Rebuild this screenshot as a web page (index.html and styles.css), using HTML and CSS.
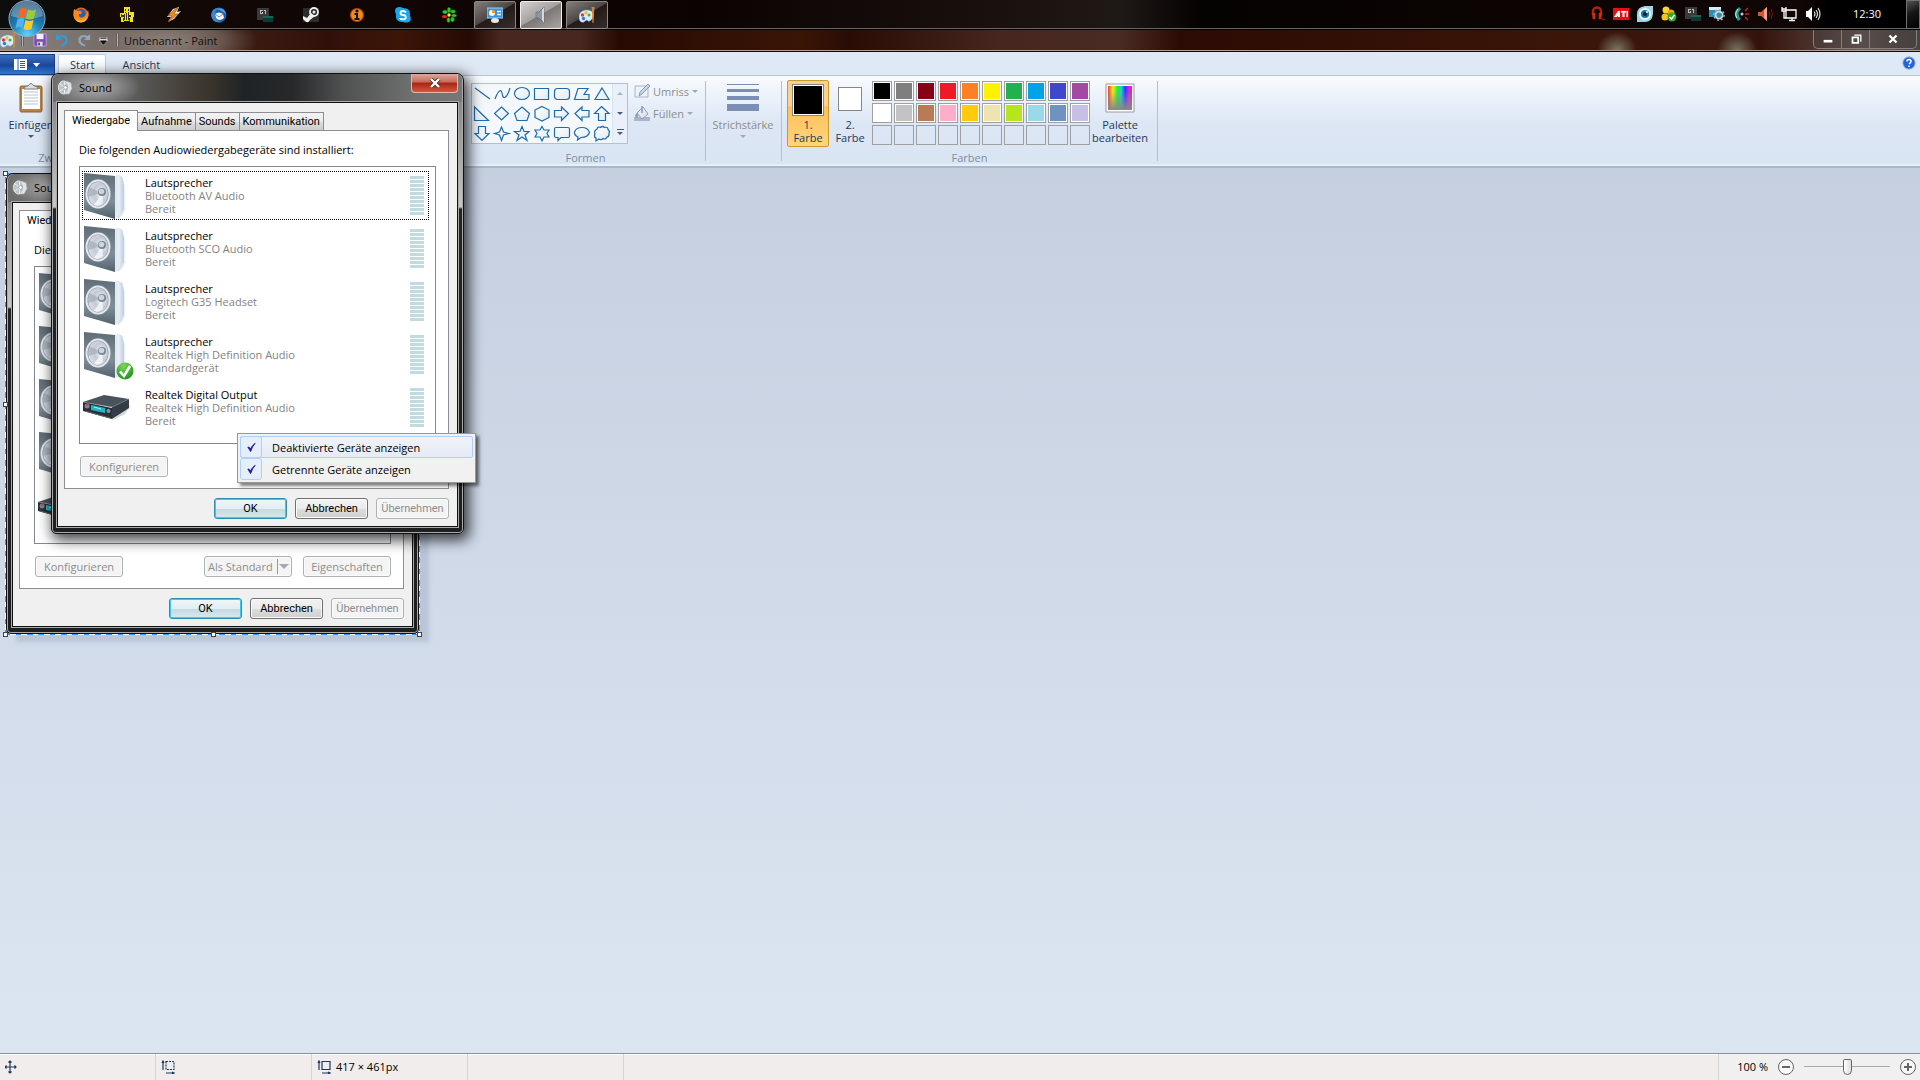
FILE: index.html
```html
<!DOCTYPE html>
<html lang="de">
<head>
<meta charset="utf-8">
<meta name="viewport" content="width=device-width, initial-scale=1.0">
<title>Unbenannt - Paint</title>
<link rel="stylesheet" href="styles.css">
</head>
<body>
<!-- Symbole -->
<svg class="defs" width="0" height="0" aria-hidden="true">
<defs>
<linearGradient id="g-side" x1="0" x2="0" y1="0" y2="1"><stop offset="0" stop-color="#5f6d77"/><stop offset=".6" stop-color="#7f8f9a"/><stop offset="1" stop-color="#52616b"/></linearGradient>
<linearGradient id="g-glass" x1="0" x2="1"><stop offset="0" stop-color="#f8fbfe"/><stop offset="1" stop-color="#b9cbe0"/></linearGradient>
<radialGradient id="g-cone" cx=".65" cy=".45" r=".7"><stop offset="0" stop-color="#f4f6f8"/><stop offset=".5" stop-color="#c3cad3"/><stop offset="1" stop-color="#dde2e7"/></radialGradient>
<radialGradient id="g-ok" cx=".4" cy=".2" r=".9"><stop offset="0" stop-color="#7fd65c"/><stop offset="1" stop-color="#128a12"/></radialGradient>
<radialGradient id="g-orb" cx=".5" cy=".95" r=".95"><stop offset="0" stop-color="#5ed6fb"/><stop offset=".45" stop-color="#1f7fb5"/><stop offset="1" stop-color="#1d4468"/></radialGradient>
<linearGradient id="g-shape" x1="0" x2="1" y1="0" y2="1"><stop offset="0" stop-color="#fff"/><stop offset="1" stop-color="#dcebf5"/></linearGradient>
<linearGradient id="g-rainbow"><stop offset="0" stop-color="#f33"/><stop offset=".2" stop-color="#ee2"/><stop offset=".4" stop-color="#2e3"/><stop offset=".55" stop-color="#2cd"/><stop offset=".72" stop-color="#33f"/><stop offset=".88" stop-color="#d2e"/><stop offset="1" stop-color="#f24"/></linearGradient>
<linearGradient id="g-fade" x1="0" x2="0" y1="0" y2="1"><stop offset=".2" stop-color="#888" stop-opacity="0"/><stop offset="1" stop-color="#888"/></linearGradient>
</defs>
<symbol id="speaker" viewBox="0 0 44 48">
<path d="M34 44L43 35 38 44 34 47z" fill="#ddd" opacity=".6"/>
<path d="M33 3L38 5 40 13v24l-6 9z" fill="url(#g-glass)" stroke="#c7d5e5" stroke-width=".6"/>
<path d="M0 1L31 4v43L0 38z" fill="url(#g-side)"/>
<path d="M31 4l3-1v42l-3 2z" fill="#e4e9ee"/>
<ellipse cx="14.500" cy="22" rx="13" ry="15" fill="#7c8993"/>
<ellipse cx="14" cy="22" rx="12.500" ry="14.500" fill="#e4e8ec"/>
<ellipse cx="14" cy="22" rx="10.500" ry="12.500" fill="#8591a0"/>
<ellipse cx="14" cy="22" rx="10" ry="12" fill="url(#g-cone)"/>
<path d="M18 21L5 15Q3 20 4 25z" fill="#9ba7b4" opacity=".6"/>
<path d="M18 21L10 33q5 2 9-2z" fill="#fff" opacity=".7"/>
<circle cx="18" cy="20" r="4" fill="#78848f"/><circle cx="17.500" cy="19.500" r="2.800" fill="#cdd4da"/>
</symbol>
<symbol id="mini-speaker" viewBox="0 0 16 16">
<path d="M9 1l5 2 1 6-3 6-4 0z" fill="#dfe3e6" stroke="#9aa0a4" stroke-width=".7"/>
<ellipse cx="6" cy="8" rx="5.500" ry="7" fill="#bcc3c7" stroke="#e9ecee"/>
<path d="M7 8L2 4M7 8l-5 4M7 8V2M7 8v6" stroke="#f4f6f7"/>
<circle cx="8" cy="8" r="2" fill="#fff" stroke="#6d767c" stroke-width=".6"/>
</symbol>
<symbol id="receiver" viewBox="0 0 50 30">
<path d="M40 18l9-6-6 9-14 7z" fill="#bbb" opacity=".6"/>
<path d="M1 9L22 2l25 4-17 8z" fill="#4a535c"/>
<path d="M1 9l29 6v11L1 18z" fill="#2a3037"/>
<path d="M30 14L47 6v9L30 26z" fill="#333c47"/>
<path d="M1 9l29 5 17-8" fill="none" stroke="#77818b" stroke-width=".6"/>
<path d="M9 12l14 3v5L9 17z" fill="#23b4c4"/><path d="M12 14l7 2" stroke="#8ff" stroke-width="1"/>
<circle cx="5" cy="13" r="2.500" fill="#7d858e"/><circle cx="5" cy="12" r="1" fill="#e33"/>
<circle cx="26.500" cy="18" r="2" fill="#8a939b"/><path d="M3 18l25 7" stroke="#59636c"/>
</symbol>
<symbol id="palette" viewBox="0 0 16 16">
<path d="M0 10C0 5 4 3 8 3c5 0 7 3 6 7-1 3-4 5-5 4-1-2-3 0-4 1-3 1-5-1-5-5z" fill="#d8edf8" stroke="#6fa6c8" stroke-width=".6"/>
<circle cx="3.500" cy="8" r="1.700" fill="#e33"/><circle cx="7" cy="5.800" r="1.600" fill="#f7b21d"/><circle cx="10" cy="8" r="1.500" fill="#39b54a"/><circle cx="4.500" cy="11.500" r="1.700" fill="#2a7fd4"/>
<path d="M13 6h2l-.5 10h-1z" fill="#f08a24"/><path d="M12.500 0h3l-.5 6h-2z" fill="#c98448"/>
</symbol>
<symbol id="g1" viewBox="0 0 16 16">
<path d="M0 1h12v12H0z" fill="#3a3a3a"/><path d="M3 3h3v1H4v2h1V5h1v2H3zM7 3h2v4H8V4H7z" fill="#bbb"/><path d="M6 9h10v6H6z" fill="#0c3a34"/><path d="M6 9h10v2H6z" fill="#1a6458"/>
</symbol>
</svg>

<div class="screen">
<header class="taskbar">
<button class="orb" aria-label="Start">
<svg viewBox="0 0 38 38"><circle cx="19" cy="18.500" r="18" fill="url(#g-orb)" stroke="#8db0c8"/><path d="M3 16a16 15 0 0 1 32 0q-16 6-32 0z" fill="#fff" opacity=".28"/>
<path d="M12 9q4-2 7 0l-2 9q-3-2-7 0z" fill="#ef6a28"/><path d="M20 9.500q4 2 8 0l-2 9q-4 2-8 0z" fill="#9bcb3c"/><path d="M9.500 19q4-2 7 0l-2 9q-3-2-7 0z" fill="#4fb4ec"/><path d="M17.500 20q4 2 8 0l-2 9q-4 2-8 0z" fill="#fdc930"/></svg>
</button>
<nav class="apps">
<button class="app" aria-label="Firefox"><svg viewBox="0 0 16 16"><circle cx="8" cy="8" r="7.500" fill="#e8650d"/><circle cx="8" cy="6.500" r="4.600" fill="#2b5fa8"/><path d="M1 2l3 2c4-1 6 1 4 3H6c-1 4 4 5 7 1l2-5c2 6-1 12-7 12S-1 10 1 2z" fill="#f58a1f"/><path d="M3 12q6 4 11-2-1 5-6 5.500-4 0-5-3.500z" fill="#fcc02e"/></svg></button>
<button class="app" aria-label="qip"><svg viewBox="0 0 16 16"><path d="M5 0h6v5h4v5h-1v5h-3v-1H5v1H2v-5H1V6h4z" fill="#f6e416"/><path d="M6 2h1v2H6zM9 2h1v2H9zM3 8h2v2H3zM7 6h1v7H7zM10 8h2v2h-2zM4 11h1v3H4zM10 11h1v3h-1zM6 5h1v1H6zM9 5h1v8H9zM2 7h1v3H2zM5 7h1v6H5z" fill="#332"/></svg></button>
<button class="app" aria-label="Winamp"><svg viewBox="0 0 16 16"><path d="M8 2L2 10h4l-3 5 6-3 7-8-4 1 2-5z" fill="#eee"/><path d="M10 2L3 9h4l-4 6 10-8H9l4-6z" fill="#ef8b1b" stroke="#a34d05" stroke-width=".6"/></svg></button>
<button class="app" aria-label="Thunderbird"><svg viewBox="0 0 16 16"><circle cx="8" cy="8" r="7.500" fill="#1f5fae"/><path d="M4 7q4-3 8 0l1 4q-5 4-8 0z" fill="#f2f4f6"/><path d="M4 7l4 3 4-3" fill="none" stroke="#889"/><path d="M0 8Q1 0 9 1 3 3 4 9t8 6Q1 17 0 8z" fill="#3989d2"/><path d="M6 2q7-2 9 5l-3-2q-2-2-6-3z" fill="#5aa0e0"/></svg></button>
<button class="app" aria-label="G1"><svg><use href="#g1"/></svg></button>
<button class="app" aria-label="Steam"><svg viewBox="0 0 16 16"><path d="M0 1h16v14H0z" fill="#2c2c2c"/><circle cx="11" cy="5" r="4" fill="#2c2c2c" stroke="#eee" stroke-width="1.800"/><path d="M0 9l4 2 4-5 4 3-5 4q-2 4-5 1l-2-2z" fill="#eee"/><circle cx="11" cy="5" r="1.500" fill="#eee"/></svg></button>
<button class="app" aria-label="Info"><svg viewBox="0 0 16 16"><circle cx="8" cy="8" r="6.500" fill="#f08b1c" stroke="#b43d0b" stroke-width="1.200"/><circle cx="8" cy="4" r="1.600" fill="#110"/><path d="M5.500 6H9v5h1.500v2h-5v-2H7V8H5.500z" fill="#110"/></svg></button>
<button class="app" aria-label="Skype"><svg viewBox="0 0 16 16"><path d="M1 1q4-2 7 0 8 0 7 8 2 4-1 6-3 1-6 0Q0 15 1 7-1 4 1 1z" fill="#18a7ec"/><path d="M11 5.500Q10 4 8 4 5.500 4 5.500 6T8 8t2.800 2.200T8 12.300 5 11" fill="none" stroke="#fff" stroke-width="1.800"/></svg></button>
<button class="app" aria-label="ICQ"><svg viewBox="0 0 16 16"><g fill="#3cc22c" stroke="#0b6410" stroke-width=".5"><ellipse cx="8" cy="3" rx="1.800" ry="2.800"/><ellipse cx="12" cy="4.500" rx="2.600" ry="1.800"/><ellipse cx="13" cy="8.500" rx="2.700" ry="1.600"/><ellipse cx="11.500" cy="12.500" rx="1.900" ry="2.400"/><ellipse cx="7.500" cy="13" rx="1.700" ry="2.600"/><ellipse cx="4" cy="5" rx="2.600" ry="1.900"/></g><ellipse cx="3.500" cy="9.500" rx="2.600" ry="1.500" fill="#e22a1c"/><circle cx="8" cy="8" r="1.700" fill="#f6ed4b"/></svg></button>
<button class="app task" aria-label="Systemsteuerung"><svg viewBox="0 0 16 16"><path d="M0 1h16v10H0z" fill="#3a93dc" stroke="#9fd4f7"/><circle cx="5" cy="6" r="3" fill="#fff"/><path d="M5 6V3a3 3 0 0 1 3 3z" fill="#f6921e"/><path d="M10 4.500h4M10 7.500h4" stroke="#fff" stroke-width="1.400"/><ellipse cx="8" cy="13.500" rx="4" ry="2.500" fill="#e8e8e8"/></svg></button>
<button class="app task current" aria-label="Sound"><svg viewBox="0 0 16 16"><path d="M3 5h3l5-5v16l-5-5H3z" fill="#8d98a0" stroke="#59646c" stroke-width=".6"/><path d="M9 3l2-3v16l-2-3z" fill="#d3dade"/></svg></button>
<button class="app task" aria-label="Paint"><svg><use href="#palette"/></svg></button>
</nav>
<div class="tray">
<svg viewBox="0 0 16 16"><path d="M4 9V5.500a4 4 0 0 1 8 0V9" fill="none" stroke="#b4240c" stroke-width="2.400"/><path d="M3 7h3v6H4zM10 7h3l-1 6h-2zM11 12l5 2z" fill="#d9300f" stroke="#b4240c" stroke-width=".6"/></svg>
<svg viewBox="0 0 16 16"><path d="M0 2h16v12H0z" fill="#e60f12"/><path d="M1 11l4-6h2v6H5V9.500L4 11zM8 5h5v1.500h-1.500V11h-2V6.500H8zM13.500 5H15v6h-1.500z" fill="#fff"/></svg>
<svg viewBox="0 0 16 16"><path d="M0 8q0-7 8-8h8v8q-1 8-8 8H0z" fill="#9fd4e2"/><circle cx="8" cy="8" r="6" fill="#eef8fb"/><circle cx="8" cy="8" r="4" fill="#15789d"/><circle cx="8" cy="8" r="2" fill="#04283a"/><circle cx="10" cy="6" r="1" fill="#fff"/></svg>
<svg viewBox="0 0 16 16"><circle cx="5" cy="4" r="3.500" fill="#fbd435"/><circle cx="10" cy="7" r="3.500" fill="#e7a911"/><circle cx="4" cy="11" r="3.500" fill="#f4c422"/><circle cx="11" cy="11" r="4.500" fill="#35a52b"/><path d="M8.500 11l2 2 3-4" fill="none" stroke="#fff" stroke-width="1.500"/></svg>
<svg><use href="#g1"/></svg>
<svg viewBox="0 0 16 16"><path d="M0 1h12v10H0z" fill="#2f8fb2"/><path d="M0 1h12v3H0z" fill="#d5eef6"/><circle cx="10" cy="9" r="3.500" fill="none" stroke="#ccd5d9" stroke-width="2"/><circle cx="10" cy="9" r="5.200" fill="none" stroke="#9db0b8" stroke-width="1.400" stroke-dasharray="2 2"/></svg>
<svg viewBox="0 0 16 16"><path d="M6 1Q-2 7 5 15L8 13Q3 8 8 3z" fill="#1d9a8c"/><path d="M5 3Q1 8 4 12" stroke="#d6f5ef" fill="none"/><circle cx="9" cy="8" r="1.500" fill="#ccc"/><path d="M12 5l3-3M12 8h4M12 11l3 3" stroke="#c22" stroke-width="1.300"/></svg>
<svg viewBox="0 0 16 16"><path d="M1 6h3l6-5v14l-6-5H1z" fill="#d0563a"/><path d="M7 4l3-3v14l-3-3z" fill="#f3a38a"/><path d="M12 5q2 3 0 6M14 3q3 5 0 10" stroke="#6b1b10" fill="none"/></svg>
<svg viewBox="0 0 16 16" fill="none" stroke="#fff" stroke-width="1.300"><path d="M5 4h10v8H5zM8 14.500h6M11 12v2M3 7v5h2M1 1v4h4V1M3 5v3M1 3h4"/></svg>
<svg viewBox="0 0 16 16"><path d="M1 5h2l4-4v14l-4-4H1z" fill="#fff"/><path d="M9 5.500q2 2.500 0 5M11 4q3 4 0 8M13 2q4 6 0 12" stroke="#ddd" stroke-width="1.200" fill="none"/></svg>
</div>
<time class="clock">12:30</time>
<button class="show-desktop" aria-label="Desktop anzeigen"></button>
</header>

<main class="paint">
<div class="titlebar">
<svg class="title-icon"><use href="#palette"/></svg>
<span class="bar-sep"></span>
<button aria-label="Speichern"><svg viewBox="0 0 16 16"><path d="M1 1h14v14H1z" fill="#7b4fb4" stroke="#b9a0dc"/><path d="M4 1h8v6H4z" fill="#f4f0fa"/><path d="M5 10h6v5H5z" fill="#ddd"/><path d="M6 11h2v3H6z" fill="#553a85"/></svg></button>
<button aria-label="Rückgängig"><svg viewBox="0 0 16 16"><path d="M1 1v7h7L5.500 5.500Q10 3 11.500 7T7 13v2.500Q15 13 14.500 7 12 0 4 3.500z" fill="#2f9be0"/></svg></button>
<button aria-label="Wiederholen"><svg viewBox="0 0 16 16"><path d="M15 1v7H8l2.500-2.500Q6 3 4.500 7T9 13v2.500Q1 13 1.500 7 4 0 12 3.500z" fill="#93a4bb"/></svg></button>
<button class="customize" aria-label="Schnellzugriff anpassen"><svg viewBox="0 0 16 16"><path d="M4 5h9v3H4zM3 8h11l-5.500 6z" fill="#ddd"/><path d="M5 6h7M5 9h7l-3.500 4z" stroke="#111" fill="#111"/></svg></button>
<span class="bar-sep"></span>
<h1>Unbenannt - Paint</h1>
<div class="win-controls">
<button aria-label="Minimieren"><svg viewBox="0 0 16 16"><path d="M3 9h10v3H3z" fill="#fff"/></svg></button>
<button aria-label="Verkleinern"><svg viewBox="0 0 16 16" fill="none" stroke="#fff"><path d="M6 3.500h7.500V11" stroke-width="1.500"/><path d="M4 6h6.500v6.500H4z" stroke-width="2"/></svg></button>
<button class="wide" aria-label="Schließen"><svg viewBox="0 0 16 16"><path d="M4 4l8 8M12 4l-8 8" stroke="#fff" stroke-width="2.600"/></svg></button>
</div>
</div>

<div class="tab-row">
<button class="file-btn" aria-label="Paint-Menü"><svg viewBox="0 0 28 14"><path d="M1 1h13v11H1z" fill="#fff"/><path d="M5 1v11" stroke="#2b5fae"/><path d="M7 3.500h5M7 5.500h5M7 7.500h5M7 9.500h5" stroke="#2b5fae"/><path d="M20 5h7l-3.500 4z" fill="#fff"/></svg></button>
<button class="rtab active">Start</button>
<button class="rtab">Ansicht</button>
<button class="help" aria-label="Hilfe"><svg viewBox="0 0 14 14"><circle cx="7" cy="7" r="6.200" fill="#2563d8" stroke="#9db9e6"/><path d="M5 5.500Q5 3.500 7 3.500t2 2Q9 6.500 7 8M7 9.500V11" fill="none" stroke="#fff" stroke-width="1.500"/></svg></button>
</div>

<div class="ribbon">
<section class="group clip-group">
<div class="group-body">
<button class="big"><svg class="clip" viewBox="0 0 24 30"><rect x="1" y="3" width="22" height="26" rx="1.500" fill="#b88440" stroke="#8e6128"/><path d="M3 6h18v20H3z" fill="#fff"/><path d="M5 9h14M5 12h14M5 15h14M5 18h14M5 21h14" stroke="#b5c4d0"/><path d="M5 6q0-3 4-3 3-5 6 0 4 0 4 3z" fill="#dde0e2" stroke="#7c7f80"/></svg>Einfügen<i class="arrow"></i></button>
</div>
<h2>Zwischenablage</h2>
</section>
<section class="group tools-group"></section>
<section class="group shape-group">
<div class="group-body">
<div class="gallery">
<div class="shapes">
<button aria-label="Linie"><svg viewBox="0 0 20 20"><path d="M3 4l15 11"/></svg></button>
<button aria-label="Kurve"><svg viewBox="0 0 20 20"><path d="M3 15C6 7 9 4 10 9c1 8 5 5 8-5" fill="none"/></svg></button>
<button aria-label="Ellipse"><svg viewBox="0 0 20 20"><ellipse cx="10" cy="9.500" rx="7.500" ry="6"/></svg></button>
<button aria-label="Rechteck"><svg viewBox="0 0 20 20"><path d="M2.500 4.500h14v11h-14z"/></svg></button>
<button aria-label="Abgerundetes Rechteck"><svg viewBox="0 0 20 20"><rect x="2.500" y="4.500" width="15" height="11" rx="3"/></svg></button>
<button aria-label="Vieleck"><svg viewBox="0 0 20 20"><path d="M6 4.500h10l-4 6h5v5H2.500z"/></svg></button>
<button aria-label="Dreieck"><svg viewBox="0 0 20 20"><path d="M10 4l7 11.500H3z"/></svg></button>
<button aria-label="Rechtwinkliges Dreieck"><svg viewBox="0 0 20 20"><path d="M2.500 3v13.500h14z"/></svg></button>
<button aria-label="Raute"><svg viewBox="0 0 20 20"><path d="M9.500 3l7 6.500-7 6.500-7-6.500z"/></svg></button>
<button aria-label="Fünfeck"><svg viewBox="0 0 20 20"><path d="M10 3l7.500 6.500-2.500 7H5l-2.500-7z"/></svg></button>
<button aria-label="Sechseck"><svg viewBox="0 0 20 20"><path d="M10 2.500l7 3.500v7.500l-7 3.500-7-3.500V6z"/></svg></button>
<button aria-label="Pfeil nach rechts"><svg viewBox="0 0 20 20"><path d="M2.500 6.500h7V3l7 6.500-7 7V13h-7z"/></svg></button>
<button aria-label="Pfeil nach links"><svg viewBox="0 0 20 20"><path d="M17 6.500h-7V3L3 9.500l7 7V13h7z"/></svg></button>
<button aria-label="Pfeil nach oben"><svg viewBox="0 0 20 20"><path d="M9.500 2.500L17 9.500h-3.500v7h-7v-7H2.500z"/></svg></button>
<button aria-label="Pfeil nach unten"><svg viewBox="0 0 20 20"><path d="M6.500 2.500h7v7H17l-7 7-7-7h3.500z"/></svg></button>
<button aria-label="Stern mit vier Zacken"><svg viewBox="0 0 20 20"><path d="M9.500 3l2 5 5.500 1.500-5.500 1.500-2 5.500-2-5.500L2.500 9.500 7.500 8z"/></svg></button>
<button aria-label="Stern mit fünf Zacken"><svg viewBox="0 0 20 20"><path d="M10 2.500l2 5h5l-4 3.500 2 5.500-5-3.500-5 3.500L7 11 2.500 7.500h5.500z"/></svg></button>
<button aria-label="Stern mit sechs Zacken"><svg viewBox="0 0 20 20"><path d="M10 2.500l2 3.500h5l-2 3.500 2 3.500h-5l-2 4-2-4H3l2-3.500L3 6h5z"/></svg></button>
<button aria-label="Legende"><svg viewBox="0 0 20 20"><path d="M4 3.500h12q1.500 0 1.500 1.500v7q0 1.500-1.500 1.500H9l-3 3v-3H4q-1.500 0-1.500-1.500V5q0-1.500 1.500-1.500z"/></svg></button>
<button aria-label="Ovale Legende"><svg viewBox="0 0 20 20"><path d="M6 13Q2 11 2.500 8 4 3.500 10 3.500t7.500 5Q16 13.500 9 13.500L5.500 16z"/></svg></button>
<button aria-label="Wolkenlegende"><svg viewBox="0 0 20 20"><path d="M5 5q1-3 3.500-1.500 2-2 4 0 3.500-1 3.500 2 2.500 2 1 4 .5 3-2 3.500-1.500 3-4 1.500-2 2-4 .5L4 17v-3q-2.500-1-1-4-1.500-3 2-5z"/></svg></button>
</div>
<div class="scroller">
<button aria-label="Nach oben"><i class="arrow up"></i></button>
<button aria-label="Nach unten"><i class="arrow"></i></button>
<button aria-label="Mehr"><i class="arrow more"></i></button>
</div>
</div>
<div class="stack">
<button disabled><svg viewBox="0 0 16 16"><path d="M1 3h13v11H1z" fill="#eef3fa" stroke="#a7b4ca"/><path d="M5 13l1-4 8-8 2 2-8 8z" fill="#c9d3e3" stroke="#8e9db8"/></svg>Umriss<i class="arrow"></i></button>
<button disabled><svg viewBox="0 0 16 16"><path d="M0 12h16v4H0z" fill="#a9b5cc"/><path d="M3 8l6-6 5 7-6 5z" fill="#e2e8f2" stroke="#8e9db8"/><path d="M8 8V1" stroke="#8e9db8" stroke-width="1.500"/><path d="M3 8q-3 2-1 5 3 0 2-4z" fill="#8e9db8"/></svg>Füllen<i class="arrow"></i></button>
</div>
</div>
<h2>Formen</h2>
</section>
<section class="group line-group">
<div class="group-body">
<button class="big" disabled><svg class="lines" viewBox="0 0 32 30"><path d="M0 1h32v1H0zM0 6h32v3H0zM0 13h32v4H0zM0 21h32v7H0z" fill="#7a8fb3"/></svg>Strichstärke<i class="arrow"></i></button>
</div>
</section>
<section class="group color-group">
<div class="group-body">
<button class="color-btn selected"><span class="swatch first"></span><span>1.</span><span>Farbe</span></button>
<button class="color-btn"><span class="swatch second"></span><span>2.</span><span>Farbe</span></button>
<div class="colors">
<button class="c black" aria-label="Schwarz"></button>
<button class="c gray" aria-label="Grau-50%"></button>
<button class="c darkred" aria-label="Dunkelrot"></button>
<button class="c red" aria-label="Rot"></button>
<button class="c orange" aria-label="Orange"></button>
<button class="c yellow" aria-label="Gelb"></button>
<button class="c green" aria-label="Grün"></button>
<button class="c turquoise" aria-label="Türkis"></button>
<button class="c indigo" aria-label="Indigo"></button>
<button class="c purple" aria-label="Lila"></button>
<button class="c white" aria-label="Weiß"></button>
<button class="c lightgray" aria-label="Grau-25%"></button>
<button class="c brown" aria-label="Braun"></button>
<button class="c rose" aria-label="Hellrosa"></button>
<button class="c gold" aria-label="Gold"></button>
<button class="c sand" aria-label="Hellgelb"></button>
<button class="c lime" aria-label="Limone"></button>
<button class="c sky" aria-label="Helltürkis"></button>
<button class="c bluegray" aria-label="Blaugrau"></button>
<button class="c lavender" aria-label="Lavendel"></button>
<span class="c"></span><span class="c"></span><span class="c"></span><span class="c"></span><span class="c"></span>
<span class="c"></span><span class="c"></span><span class="c"></span><span class="c"></span><span class="c"></span>
</div>
<button class="big edit"><svg class="spectrum" viewBox="0 0 30 30"><path d="M1 1h28v28H1z" fill="#fff" stroke="#999"/><path d="M3 3h24v24H3z" fill="url(#g-rainbow)"/><path d="M3 3h24v24H3z" fill="url(#g-fade)"/></svg>Palette<br>bearbeiten</button>
</div>
<h2>Farben</h2>
</section>
</div>

<div class="workspace">
<div class="selection">
<div class="dialog pasted">
<div class="dialog-title"><svg><use href="#mini-speaker"/></svg><span>Sound</span></div>
<div class="client">
<div class="tabs"><button class="active">Wiedergabe</button></div>
<div class="panel">
<p>Die</p>
<ul class="devices">
<li><svg><use href="#speaker"/></svg></li>
<li><svg><use href="#speaker"/></svg></li>
<li><svg><use href="#speaker"/></svg></li>
<li><svg><use href="#speaker"/></svg></li>
<li><svg class="box"><use href="#receiver"/></svg></li>
</ul>
<div class="actions">
<button class="btn wide" disabled>Konfigurieren</button>
<button class="btn wide split" disabled>Als Standard<i class="arrow"></i></button>
<button class="btn wide" disabled>Eigenschaften</button>
</div>
</div>
<div class="footer"><button class="btn default">OK</button><button class="btn">Abbrechen</button><button class="btn" disabled>Übernehmen</button></div>
</div>
</div>
<i class="handle tl"></i><i class="handle ml"></i><i class="handle bl"></i><i class="handle bm"></i><i class="handle br"></i>
</div>
</div>

<footer class="statusbar">
<div class="cell"><svg viewBox="0 0 14 14"><path d="M5 1v12M0 7h11M3.500 2.500L5 1l1.500 1.500M3.500 11.500L5 13l1.500-1.500M1.500 5.500L0 7l1.500 1.500M9.500 5.500L11 7 9.500 8.500"/></svg></div>
<div class="cell"><svg viewBox="0 0 14 14"><path d="M2 1v9M1 3l1-2 1 2M5 13h8M11 12l2 1-2 1"/><path d="M5 1.500h8v8H5z" stroke-dasharray="2 1"/></svg></div>
<div class="cell"><svg viewBox="0 0 14 14"><path d="M2 1v9M1 3l1-2 1 2M5 13h8M11 12l2 1-2 1M5 1.500h8v8H5z"/></svg>417 × 461px</div>
<div class="cell"></div>
<div class="zoom">
<label for="zoom">100 %</label>
<button aria-label="Verkleinern"><svg viewBox="0 0 16 16"><circle cx="8" cy="8" r="7.500"/><path d="M4 8h8" stroke-width="2"/></svg></button>
<input type="range" id="zoom" min="0" max="100" value="50">
<button aria-label="Vergrößern"><svg viewBox="0 0 16 16"><circle cx="8" cy="8" r="7.500"/><path d="M4 8h8M8 4v8" stroke-width="2"/></svg></button>
</div>
</footer>
</main>

<!-- Sound-Dialog -->
<div class="dialog front">
<div class="dialog-title"><svg><use href="#mini-speaker"/></svg><span>Sound</span>
<button class="close" aria-label="Schließen"><svg viewBox="0 0 12 10"><path d="M2 1l8 8M10 1L2 9" stroke="#5b2a22" stroke-width="4"/><path d="M2 1l8 8M10 1L2 9" stroke="#fff" stroke-width="2.400"/></svg></button>
</div>
<div class="client">
<div class="tabs"><button class="active">Wiedergabe</button><button>Aufnahme</button><button>Sounds</button><button>Kommunikation</button></div>
<div class="panel">
<p>Die folgenden Audiowiedergabegeräte sind installiert:</p>
<ul class="devices">
<li class="focus"><svg><use href="#speaker"/></svg><div><b>Lautsprecher</b>Bluetooth AV Audio<br>Bereit</div><span class="level"></span></li>
<li><svg><use href="#speaker"/></svg><div><b>Lautsprecher</b>Bluetooth SCO Audio<br>Bereit</div><span class="level"></span></li>
<li><svg><use href="#speaker"/></svg><div><b>Lautsprecher</b>Logitech G35 Headset<br>Bereit</div><span class="level"></span></li>
<li><svg><use href="#speaker"/></svg><svg class="badge" viewBox="0 0 18 18"><circle cx="9" cy="9" r="8.500" fill="url(#g-ok)"/><path d="M4 9.500l4 4.500 6-10" fill="none" stroke="#fff" stroke-width="2.600"/></svg><div><b>Lautsprecher</b>Realtek High Definition Audio<br>Standardgerät</div><span class="level"></span></li>
<li><svg class="box"><use href="#receiver"/></svg><div><b>Realtek Digital Output</b>Realtek High Definition Audio<br>Bereit</div><span class="level"></span></li>
</ul>
<div class="actions"><button class="btn wide" disabled>Konfigurieren</button></div>
</div>
<div class="footer"><button class="btn default">OK</button><button class="btn">Abbrechen</button><button class="btn" disabled>Übernehmen</button></div>
</div>
<div class="menu" role="menu">
<button class="hover" role="menuitemcheckbox" aria-checked="true"><span class="check"><svg viewBox="0 0 12 12"><path d="M2 6l3 5q2-6 5-9-4 3-5 6L3 6z" fill="#1a1a9c" stroke="#1a1a9c"/></svg></span>Deaktivierte Geräte anzeigen</button>
<button role="menuitemcheckbox" aria-checked="true"><span class="check"><svg viewBox="0 0 12 12"><path d="M2 6l3 5q2-6 5-9-4 3-5 6L3 6z" fill="#1a1a9c" stroke="#1a1a9c"/></svg></span>Getrennte Geräte anzeigen</button>
</div>
</div>
</div>
</body>
</html>
```
FILE: styles.css
```css
* { box-sizing: border-box; }
body {
  margin: 0;
  font-family: "Open Sans", "Noto Sans", sans-serif;
  font-size: 11px;
  line-height: 13px;
  color: #000;
}
button { font: inherit; color: inherit; background: none; border: 0; padding: 0; }
h1, h2, p, ul { margin: 0; padding: 0; font-weight: normal; font-size: inherit; }
svg { display: block; flex: none; }
.defs { position: absolute; }
.screen { position: relative; display: flex; flex-direction: column; min-height: 100vh; }

/* Taskleiste */
.taskbar {
  display: flex; height: 30px; padding-left: 60px; position: relative; z-index: 2;
  background: linear-gradient(to right, #0c0d0d 0, #0d0b0a 90px, #130907 100px, #0b0302 700px, #1a110e 1000px, #1f1916 1120px, #050202 1200px, #0b0403 1500px, #100605 1800px, #000 1830px);
  border-bottom: 1px solid #000; box-shadow: inset 0 -1px #66665f;
}
.orb { position: absolute; left: 8px; top: 0; width: 38px; height: 38px; }
.apps { display: flex; gap: 4px; flex: 1; }
.app { width: 42px; height: 28px; margin-top: 1px; display: flex; align-items: center; justify-content: center; }
.app svg, .tray svg { width: 16px; height: 16px; }
.task { border: 1px solid #8b8988; border-radius: 2px; background: linear-gradient(150deg, #837e7c 0, #4c4745 48%, #241b19 50%, #362d2a 100%); }
.task.current { border-color: #eee; background: linear-gradient(150deg, #d2d0cf 0, #a5a1a0 48%, #7c7674 50%, #aaa4a2 100%); }
.tray { display: flex; gap: 8px; align-items: center; padding-bottom: 2px; }
.clock { width: 78px; margin-left: 7px; text-align: center; color: #fff; line-height: 27px; }
.show-desktop { width: 14px; height: 29px; border: 1px solid #74706f; background: linear-gradient(150deg, #555 0, #151515 45%, #000 100%); }

/* Paint */
.paint { flex: 1; display: flex; flex-direction: column; }
.titlebar {
  display: flex; align-items: center; height: 22px; padding-bottom: 1px; color: #111;
  background:
    radial-gradient(ellipse 90px 30px at 168px 11px, rgba(150,140,136,.85), rgba(130,118,112,.6) 60%, transparent),
    radial-gradient(ellipse 20px 18px at 1617px 20px, #7c7766, transparent),
    radial-gradient(ellipse 20px 18px at 1737px 20px, #777262, transparent),
    linear-gradient(to right, #8b8683 0, #776f6b 90px, #3b1c12 240px, #32100a 330px, #3c1508 400px, #260a04 470px, #472720 500px, #472720 580px, #280a03 620px, #3a1506 800px, #2a0c05 850px, #46261e 1000px, #4a2b23 1120px, #2c0b04 1180px, #3a1508 1560px, #3a150c 1640px, #3c1a12 1715px, #35130c 1760px, #4a302a 1810px, #6a5f5b 1860px, #454343 1920px);
  border-bottom: 1px solid #140808; box-shadow: inset 0 -1px #b09b92;
}
.titlebar button { width: 22px; display: flex; justify-content: center; }
.titlebar .customize { width: 16px; }
.titlebar svg { width: 14px; height: 14px; }
.titlebar .title-icon { width: 16px; height: 16px; }
.bar-sep { width: 3px; height: 12px; margin: 0 5px; border: solid #5f5b59; border-width: 0 1px; background: #bbb; }
.titlebar h1 { flex: 1; }
.win-controls { display: flex; align-self: flex-start; margin-right: 3px; border: 1px solid #85807d; border-top: 0; border-radius: 0 0 5px 5px; background: rgba(70,60,58,.5); }
.titlebar .win-controls button { width: 28px; height: 18px; align-items: center; border-right: 1px solid #85807d; }
.titlebar .win-controls .wide { width: 46px; border: 0; }

.tab-row { display: flex; height: 24px; padding-top: 2px; background: #dfe9f5; color: #1e395b; border-bottom: 1px solid #b6c6dc; }
.file-btn { width: 55px; height: 21px; margin-right: 3px; display: flex; align-items: center; justify-content: center; background: linear-gradient(#3d6fc0, #1e4a9e 50%, #1a4a9c 55%, #2f78cf); border: 1px solid #1d3f87; border-left: 0; }
.file-btn svg { width: 28px; height: 14px; }
.rtab { padding: 0 11px 2px; border: 1px solid transparent; border-bottom: 0; }
.rtab.active { background: #fbfdff; border-color: #bacbe2; border-radius: 2px 2px 0 0; margin-right: 4px; }
.help { margin: 0 4px 4px auto; }
.help svg { width: 14px; height: 14px; }

.ribbon { display: flex; height: 92px; color: #1e395b; background: linear-gradient(#f8fbfe 0, #e6eef8 30px, #dce6f4 50px, #dae5f4 100%); border-bottom: 2px solid #a9b8cc; box-shadow: inset 0 -2px #e6f0fa; }
.group { display: flex; flex-direction: column; align-items: center; justify-content: space-between; padding: 4px 5px 2px; border-right: 1px solid; border-image: linear-gradient(transparent 6px, #b1c0d8 6px 84px, transparent 84px) 1; }
.group h2 { color: #7d8ca3; }
.group-body { display: flex; align-self: stretch; }
.clip-group { width: 160px; padding-left: 4px; }
.tools-group { width: 306px; border: 0; }
.big { display: flex; flex-direction: column; align-items: center; padding-top: 3px; min-width: 54px; }
.big svg { margin-bottom: 5px; }
.clip { width: 24px; height: 30px; }
.lines { width: 32px; height: 30px; }
.spectrum { width: 30px; height: 30px; }
.arrow { border: 3px solid transparent; border-top-color: #4b5a75; border-bottom: 0; }
.big .arrow { margin-top: 4px; }
.arrow.up { border: 3px solid transparent; border-bottom-color: #a8b2c4; border-top: 0; }
.arrow.more { position: relative; }
.arrow.more::before { content: ""; position: absolute; left: -3px; top: -6px; width: 7px; height: 1px; background: #4b5a75; }
button:disabled { color: #8d8d8d; }
button:disabled .arrow { border-top-color: #a2a8b4; }
.gallery { display: flex; margin-top: 3px; border: 1px solid #b1c0d8; background: #f4f8fd; height: 61px; }
.shapes { display: grid; grid-template-columns: repeat(7, 20px); grid-auto-rows: 20px; }
.shapes svg { width: 20px; height: 20px; fill: url(#g-shape); stroke: #1f6aa8; stroke-width: 1.2; }
.scroller { width: 15px; display: flex; flex-direction: column; background: #e9f0f9; border-left: 1px solid #dae5f2; }
.scroller button { flex: 1; display: flex; align-items: center; justify-content: center; }
.stack { margin-left: 6px; }
.stack button { display: flex; align-items: center; gap: 3px; height: 22px; }
.stack svg { width: 16px; height: 16px; }
.shape-group { width: 240px; }
.line-group { width: 76px; padding-left: 4px; }
.line-group .big { flex: 1; }
.color-group { width: 376px; }
.color-btn { display: flex; flex-direction: column; align-items: center; justify-content: flex-end; width: 42px; height: 67px; padding-bottom: 2px; position: relative; border: 1px solid transparent; border-radius: 2px; }
.color-btn.selected { border-color: #c8992c; background: linear-gradient(#f8d08d, #fcd28e 38%, #ffbe5a 40%, #ffd67c); }
.swatch { position: absolute; border: 1px solid #83878d; box-shadow: inset 0 0 0 1px #fff; }
.swatch.first { left: 4px; top: 3px; width: 32px; height: 32px; background: #000; }
.swatch.second { left: 8px; top: 6px; width: 24px; height: 24px; background: #fff; }
.colors { display: grid; grid-template-columns: repeat(10, 20px); grid-auto-rows: 20px; gap: 2px; margin: 1px 2px 0 1px; }
.c { border: 1px solid #a0a0a0; }
button.c { box-shadow: inset 0 0 0 1px #fff; }
.black { background: #000; } .gray { background: #7f7f7f; } .darkred { background: #880015; } .red { background: #ed1c24; }
.orange { background: #ff7f27; } .yellow { background: #fff200; } .green { background: #22b14c; } .turquoise { background: #00a2e8; }
.indigo { background: #3f48cc; } .purple { background: #a349a4; } .white { background: #fff; } .lightgray { background: #c3c3c3; }
.brown { background: #b97a57; } .rose { background: #ffaec9; } .gold { background: #ffc90e; } .sand { background: #efe4b0; }
.lime { background: #b5e61d; } .sky { background: #99d9ea; } .bluegray { background: #7092be; } .lavender { background: #c8bfe7; }

.workspace { flex: 1; padding: 5px; background: linear-gradient(#c5cfe0, #dce6f2); }
.selection { position: relative; width: 415px; padding: 0 1px 1px; background: repeating-linear-gradient(45deg, #3399ff 0 4px, #fff 4px 8px); box-shadow: 10px 8px 4px -1px rgba(150,165,190,.4); }
.handle { position: absolute; width: 5px; height: 5px; background: #fff; border: 1px solid #444; }
.tl { left: -2px; top: -2px; }
.ml { left: -2px; top: 229px; }
.bl { left: -2px; bottom: -2px; }
.bm { left: 206px; bottom: -2px; }
.br { right: -2px; bottom: -2px; }

.statusbar { display: flex; height: 27px; background: #f0edec; border-top: 1px solid #8b9097; box-shadow: inset 0 1px #fff; }
.cell { width: 156px; display: flex; align-items: center; gap: 5px; padding: 0 0 1px 5px; border-right: 1px solid #d6d5d4; }
.cell svg { width: 14px; height: 14px; fill: none; stroke: #1e395b; stroke-width: 1.2; }
.zoom { display: flex; align-items: center; gap: 10px; margin-left: auto; padding: 0 4px 1px 18px; border-left: 1px solid #d6d5d4; background: #f0f0f0; }
.zoom svg { width: 16px; height: 16px; fill: #f8f8f8; stroke: #666; }
.zoom input { width: 86px; height: 18px; margin: 0; appearance: none; background: linear-gradient(#aaa, #aaa) center / 100% 1px no-repeat; }
.zoom input::-webkit-slider-thumb { appearance: none; width: 9px; height: 16px; background: linear-gradient(to right, #fff, #ddd); border: 1px solid #666; border-radius: 2px 2px 5px 5px; }

/* Dialoge */
.dialog {
  width: 413px; padding: 0 5px 6px; border: 1px solid #111; border-radius: 7px 7px 5px 5px;
  background: linear-gradient(#6f6f6f 0, #8a8a8a 30px, #c6c6c6 133px, #232527 135px, #1d1f21 100%);
  box-shadow: inset 0 0 0 1px #aaa;
}
.front {
  position: absolute; left: 51px; top: 73px; z-index: 3;
  box-shadow: inset 0 0 0 1px #aaa, 3px 4px 14px 2px rgba(0,0,0,.75);
}
.dialog-title {
  display: flex; align-items: center; gap: 6px; height: 28px; margin: 0 -4px; padding: 0 0 2px 5px;
  border-radius: 6px 6px 0 0;
  background: radial-gradient(ellipse 44px 20px at 44px 13px, rgba(195,195,195,.8), transparent), linear-gradient(to right, #6d6d6d 0, #5c5c5c 80px, #454039 130px, #38332a 160px, #202325 190px, #26282a 240px, #505252 290px, #6f7070 360px, #777 100%);
}
.dialog-title > svg { width: 15px; height: 15px; }
.close { align-self: flex-start; margin: 0 4px 0 auto; width: 47px; height: 19px; display: flex; align-items: center; justify-content: center; border: 1px solid #e8b5ab; border-top: 0; border-radius: 0 0 4px 4px; background: linear-gradient(#dda79c 0, #c76a58 45%, #ac2311 50%, #cf5a40 100%); }
.close svg { width: 12px; height: 10px; }
.client { background: #f0f0f0; border: 1px solid #111; box-shadow: 0 0 0 1px #aaa; padding: 7px 8px 7px 6px; }
.tabs { display: flex; align-items: flex-end; height: 20px; }
.tabs button { height: 18px; padding: 0 3px; border: 1px solid #8c8e94; border-bottom: 0; border-right-width: 0; background: linear-gradient(#f3f3f3, #ebebeb 50%, #ddd 51%, #cdcdcd); }
.tabs button:last-child { border-right-width: 1px; }
.tabs .active { height: 21px; padding: 0 7px 2px; border-right-width: 1px; margin-right: -1px; margin-bottom: -1px; background: #fff; position: relative; z-index: 1; }
.tabs, .footer { font-family: Roboto, "Open Sans", sans-serif; }
.panel { width: 385px; border: 1px solid #8c8e94; background: #fff; padding: 12px 11px 11px 14px; }
.devices { list-style: none; width: 357px; height: 278px; margin: 10px 0 12px; padding: 4px 6px 0 2px; border: 1px solid #828790; }
.devices li { position: relative; display: flex; align-items: center; height: 49px; margin-bottom: 4px; padding-left: 1px; border: 1px dotted transparent; color: #838383; }
.devices li.focus { border-color: #000; }
.devices svg { width: 44px; height: 48px; margin-right: 17px; }
.devices svg.box { width: 50px; height: 30px; margin: 0 13px 0 -2px; }
.devices .badge { position: absolute; left: 33px; top: 31px; width: 18px; height: 18px; margin: 0; }
.devices b { display: block; font-weight: normal; color: #000; }
.level { width: 14px; height: 39px; margin: 0 4px 0 auto; background: repeating-linear-gradient(#c1dce1 0 3px, #fff 3px 4px); }
.actions { display: flex; justify-content: space-between; width: 356px; margin-left: 1px; }
.btn { width: 73px; height: 21px; border: 1px solid #707070; border-radius: 3px; background: linear-gradient(#f2f2f2, #ebebeb 50%, #ddd 51%, #cfcfcf); box-shadow: inset 0 0 0 1px #fbfbfb; }
.btn.wide { width: 88px; }
.btn.default { border-color: #2f8fb5; box-shadow: inset 0 0 0 1px #36ccf6; background: linear-gradient(#f0f7f9, #e2eef2 50%, #c7d8de 51%, #d5eaf0); }
.btn:disabled { background: #f4f4f4; border-color: #adb2b5; }
.actions .wide:nth-child(2) { margin-left: 70px; }
.split { display: flex; align-items: center; justify-content: space-between; padding: 0 2px 0 3px; }
.split .arrow { border-width: 5px 5px 0; box-shadow: none; position: relative; }
.split .arrow::before { content: ""; position: absolute; left: -7px; top: -10px; width: 1px; height: 15px; background: #999; }
.footer { display: flex; justify-content: flex-end; gap: 8px; margin-top: 9px; }

.menu { position: absolute; left: 185px; top: 359px; width: 239px; padding: 2px; background: #f1f1f1; border: 1px solid #979797; box-shadow: 3px 3px 3px rgba(0,0,0,.5); }
.menu button { display: flex; align-items: center; gap: 10px; width: 100%; height: 22px; border: 1px solid transparent; border-radius: 2px; }
.menu .hover { border-color: #aecff7; background: linear-gradient(#f0f3f8, #e5ebf5); }
.check { width: 22px; height: 22px; margin-left: -1px; display: flex; align-items: center; justify-content: center; border: 1px solid #afd0f7; border-radius: 3px; background: #e6eff9; }
.check svg { width: 11px; height: 12px; }
```
